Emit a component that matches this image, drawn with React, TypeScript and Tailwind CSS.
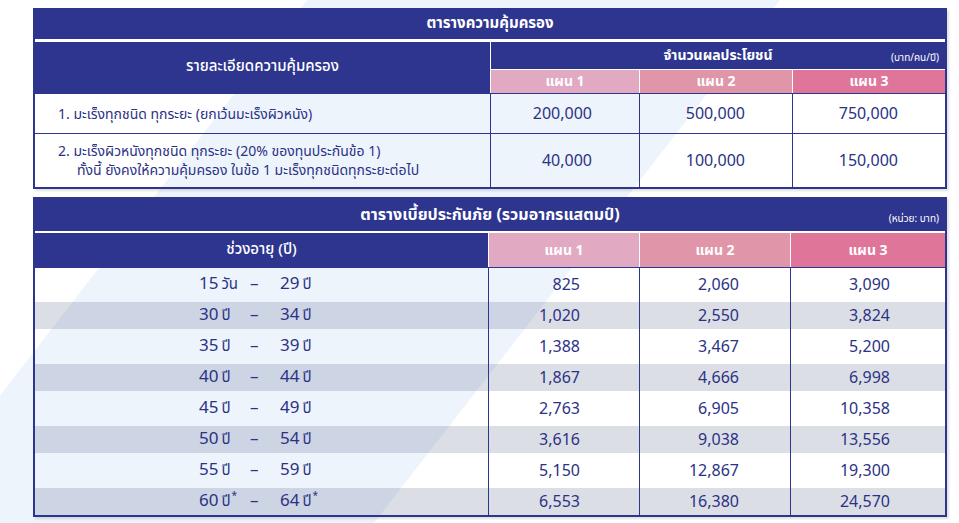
import React from 'react';

const plans = ['แผน 1', 'แผน 2', 'แผน 3'];

const coverage = [
  {
    lines: ['1. มะเร็งทุกชนิด ทุกระยะ (ยกเว้นมะเร็งผิวหนัง)'],
    values: ['200,000', '500,000', '750,000'],
    h: 'h-[40px]',
  },
  {
    lines: [
      '2. มะเร็งผิวหนังทุกชนิด ทุกระยะ (20% ของทุนประกันข้อ 1)',
      'ทั้งนี้ ยังคงให้ความคุ้มครอง ในข้อ 1 มะเร็งทุกชนิดทุกระยะต่อไป',
    ],
    values: ['40,000', '100,000', '150,000'],
    h: 'h-[54px]',
  },
];

const premiums = [
  { from: '15', fromUnit: 'วัน', to: '29', values: ['825', '2,060', '3,090'] },
  { from: '30', to: '34', values: ['1,020', '2,550', '3,824'] },
  { from: '35', to: '39', values: ['1,388', '3,467', '5,200'] },
  { from: '40', to: '44', values: ['1,867', '4,666', '6,998'] },
  { from: '45', to: '49', values: ['2,763', '6,905', '10,358'] },
  { from: '50', to: '54', values: ['3,616', '9,038', '13,556'] },
  { from: '55', to: '59', values: ['5,150', '12,867', '19,300'] },
  { from: '60', to: '64', values: ['6,553', '16,380', '24,570'], star: true },
];

const pink = ['bg-[#e2a9c2]', 'bg-[#e096a8]', 'bg-[#df7699]'];

function Star() {
  return <span className="ml-[1px] text-[10px] leading-none align-super">*</span>;
}

export default function App() {
  return (
    <div className="relative w-[959px] h-[523px] overflow-hidden bg-white font-['Noto_Sans_Thai','Noto_Sans',sans-serif] text-[#2b3285]">
      {/* background stripe */}
      <svg className="absolute inset-0" width="959" height="523" viewBox="0 0 959 523">
        <polygon points="307,0 780,0 374,523 -99,523" fill="#eef4fc" />
      </svg>

      <div className="relative pt-[8px] pl-[33px]">
        {/* Coverage table */}
        <div className="w-[914px] border-2 border-[#2e358f] shadow-[2px_2px_2px_rgba(0,0,0,0.12)]">
          <div className="h-[29px] bg-[#2e358f] flex items-center justify-center text-white font-bold text-[15px]">
            ตารางความคุ้มครอง
          </div>
          <div className="bg-white pt-[3px]">
            <div className="flex h-[51px] gap-px">
              <div className="w-[455px] bg-[#2e358f] flex items-center justify-center text-white text-[15px] font-medium">
                รายละเอียดความคุ้มครอง
              </div>
              <div className="flex-1 flex flex-col gap-px">
                <div className="h-[27px] bg-[#2e358f] grid grid-cols-[1fr_auto_1fr] items-center text-white">
                  <span />
                  <span className="font-bold text-[14px]">จำนวนผลประโยชน์</span>
                  <span className="justify-self-end self-end pb-[3px] pr-[6px] text-[10px]">(บาท/คน/ปี)</span>
                </div>
                <div className="flex-1 flex gap-px">
                  {plans.map((p, i) => (
                    <div
                      key={p}
                      className={`${i === 0 ? 'w-[148px]' : i === 1 ? 'w-[152px]' : 'flex-1'} ${pink[i]} flex items-center justify-center text-white font-bold text-[14px]`}
                    >
                      {p}
                    </div>
                  ))}
                </div>
              </div>
            </div>
          </div>
          {coverage.map((row, r) => (
            <div key={r} className={`flex border-t border-[#2e358f] ${row.h}`}>
              <div className="w-[455px] flex flex-col justify-center pl-[23px] pt-[1px] text-[14px] leading-[19px]">
                {row.lines.map((l, i) => (
                  <div key={i} className={i > 0 ? 'pl-[19px]' : ''}>
                    {l}
                  </div>
                ))}
              </div>
              {row.values.map((v, i) => (
                <div
                  key={i}
                  className={`${i === 0 ? 'w-[149px]' : i === 1 ? 'w-[153px]' : 'flex-1'} border-l border-[#2e358f] flex items-center justify-end pr-[47px] pt-[1px] text-[16px]`}
                >
                  {v}
                </div>
              ))}
            </div>
          ))}
        </div>

        {/* Premium table */}
        <div className="mt-[8px] w-[914px] border-2 border-[#2e358f] shadow-[2px_2px_2px_rgba(0,0,0,0.12)]">
          <div className="h-[32px] bg-[#2e358f] grid grid-cols-[1fr_auto_1fr] items-center text-white">
            <span />
            <span className="font-bold text-[16px]">ตารางเบี้ยประกันภัย (รวมอากรแสตมป์)</span>
            <span className="justify-self-end pt-[8px] pr-[6px] text-[10px]">(หน่วย: บาท)</span>
          </div>
          <div className="bg-white pt-[2px]">
            <div className="flex h-[34px] gap-px">
              <div className="w-[453px] bg-[#2e358f] flex items-center justify-center text-white text-[15px] font-medium">
                ช่วงอายุ (ปี)
              </div>
              {plans.map((p, i) => (
                <div
                  key={p}
                  className={`${i === 2 ? 'flex-1' : 'w-[150px]'} ${pink[i]} flex items-center justify-center text-white font-bold text-[14px]`}
                >
                  {p}
                </div>
              ))}
            </div>
          </div>
          <div className="border-t border-[#2e358f]">
            {premiums.map((row, r) => {
              const gray = r % 2 === 1;
              const h = gray ? 'h-[27px]' : r === 0 ? 'h-[34px]' : 'h-[35px]';
              return (
                <div key={r} className={`flex ${h} text-[16px] ${gray ? 'bg-[rgba(40,50,100,0.16)]' : ''}`}>
                  <div className="w-[453px] flex items-center pl-[164px] text-[17px]">
                    <span className="w-[51px]">
                      {row.from}
                      <span className="ml-[3px] text-[15px]">{row.fromUnit ?? 'ปี'}</span>
                      {row.star && <Star />}
                    </span>
                    <span className="w-[30px]">–</span>
                    <span>
                      {row.to}
                      <span className="ml-[3px] text-[15px]">ปี</span>
                      {row.star && <Star />}
                    </span>
                  </div>
                  {row.values.map((v, i) => (
                    <div
                      key={i}
                      className={`${i === 0 ? 'w-[151px] pr-[59px]' : i === 1 ? 'w-[151px] pr-[51px]' : 'flex-1 pr-[55px]'} border-l border-[#2e358f] flex items-center justify-end`}
                    >
                      {v}
                    </div>
                  ))}
                </div>
              );
            })}
          </div>
        </div>
      </div>
    </div>
  );
}
